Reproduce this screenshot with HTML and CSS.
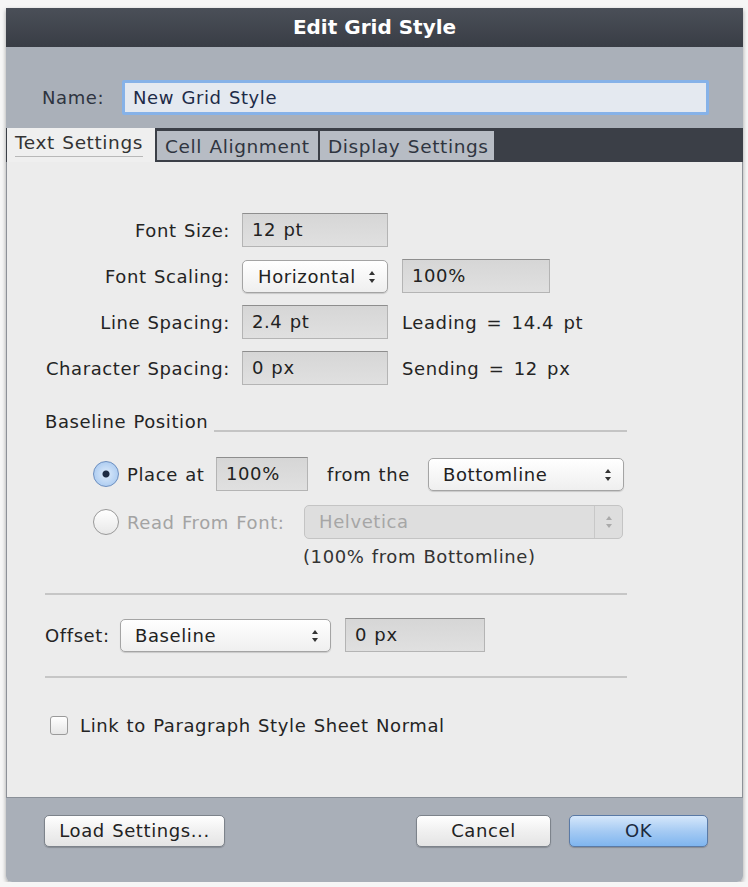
FILE: index.html
```html
<!DOCTYPE html>
<html lang="en">
<head>
    <meta charset="UTF-8">
    <meta name="viewport" content="width=device-width, initial-scale=1.0">
    <title>Edit Grid Style</title>
    <link rel="stylesheet" href="styles.css">
</head>
<body>
    <div class="dialog">
        <div class="titlebar">Edit Grid Style</div>

        <div class="name-bar">
            <span class="name-label">Name:</span>
            <div class="name-field">New Grid Style</div>
        </div>

        <div class="tabs">
            <div class="tab active">Text Settings</div>
            <div class="tab cell">Cell Alignment</div>
            <div class="tab display">Display Settings</div>
        </div>

        <div class="content">
            <div class="form">
                <span class="label">Font Size:</span>
                <div class="field">12 pt</div>
                <span></span>

                <span class="label">Font Scaling:</span>
                <div class="popup small">Horizontal
                    <svg class="arrows" width="8" height="14" viewBox="0 0 8 14"><path d="M4 1 L7 5 L1 5 Z M4 13 L7 9 L1 9 Z" fill="#333"/></svg>
                </div>
                <div class="field side">100%</div>

                <span class="label">Line Spacing:</span>
                <div class="field">2.4 pt</div>
                <span class="note">Leading = 14.4 pt</span>

                <span class="label">Character Spacing:</span>
                <div class="field">0 px</div>
                <span class="note">Sending = 12 px</span>
            </div>

            <div class="section-head">
                <span>Baseline Position</span>
                <div class="rule"></div>
            </div>

            <div class="radio-row">
                <span class="radio checked"></span>
                <span class="radio-text place">Place at</span>
                <div class="field pct">100%</div>
                <span class="from">from the</span>
                <div class="popup wide">Bottomline
                    <svg class="arrows" width="8" height="14" viewBox="0 0 8 14"><path d="M4 1 L7 5 L1 5 Z M4 13 L7 9 L1 9 Z" fill="#333"/></svg>
                </div>
            </div>

            <div class="radio-row second">
                <span class="radio"></span>
                <span class="radio-text read disabled">Read From Font:</span>
                <div class="popup disabled-popup">Helvetica
                    <span class="arrow-box">
                        <svg width="8" height="14" viewBox="0 0 8 14"><path d="M4 1 L7 5 L1 5 Z M4 13 L7 9 L1 9 Z" fill="#aaa"/></svg>
                    </span>
                </div>
            </div>
            <div class="hint">(100% from Bottomline)</div>

            <div class="separator"></div>

            <div class="offset-row">
                <span class="offset-label">Offset:</span>
                <div class="popup offset">Baseline
                    <svg class="arrows" width="8" height="14" viewBox="0 0 8 14"><path d="M4 1 L7 5 L1 5 Z M4 13 L7 9 L1 9 Z" fill="#333"/></svg>
                </div>
                <div class="field offset-field">0 px</div>
            </div>

            <div class="separator"></div>

            <div class="check-row">
                <span class="checkbox"></span>
                <span>Link to Paragraph Style Sheet Normal</span>
            </div>
        </div>

        <div class="footer">
            <div class="button load">Load Settings...</div>
            <div class="footer-right">
                <div class="button cancel">Cancel</div>
                <div class="button ok">OK</div>
            </div>
        </div>
    </div>
</body>
</html>
```

FILE: styles.css
```css
body {
    margin: 0;
    padding: 0;
    background-color: #f6f6f6;
    font-family: "DejaVu Sans", Verdana, sans-serif;
    font-size: 18px;
    letter-spacing: 0.6px;
    word-spacing: 1px;
    white-space: nowrap;
    color: #242424;
}

.dialog {
    width: 737px;
    margin: 8px 0 0 6px;
    border-radius: 0 0 6px 6px;
    overflow: hidden;
    box-shadow: 0 2px 4px rgba(0, 0, 0, 0.35);
}

.titlebar {
    height: 39px;
    line-height: 39px;
    text-align: center;
    color: #fff;
    font-weight: bold;
    font-size: 20px;
    letter-spacing: 0;
    word-spacing: 0;
    background: linear-gradient(#4a4f58, #393d45);
}

.name-bar {
    height: 81px;
    box-sizing: border-box;
    display: flex;
    align-items: flex-end;
    padding: 0 34px 13px 36px;
    background-color: #aab0b9;
}

.name-label {
    width: 80px;
    line-height: 35px;
    color: #2e3440;
}

.name-field {
    flex: 1;
    height: 35px;
    box-sizing: border-box;
    line-height: 29px;
    padding-left: 8px;
    color: #1d2b48;
    background-color: #e4e9f0;
    border: 3px solid #86b2e8;
    border-radius: 2px;
}

.tabs {
    height: 34px;
    box-sizing: border-box;
    display: flex;
    align-items: flex-end;
    padding-left: 1px;
    background-color: #3b3f47;
}

.tab {
    height: 31px;
    line-height: 31px;
    padding-left: 8px;
    margin-right: 2px;
    box-sizing: border-box;
    font-size: 18.5px;
    color: #2f3540;
    background-color: #b7bcc4;
    border-bottom: 2px solid #3b3f47;
}

.tab.active {
    width: 148px;
    height: 34px;
    line-height: 30px;
    color: #333;
    background-color: #efefef;
    border-bottom: 2px solid #efefef;
    text-decoration: underline;
    text-decoration-color: #b8b8b8;
    text-underline-offset: 7px;
}

.tab.cell {
    width: 161px;
}

.tab.display {
    width: 174px;
}

.content {
    height: 635px;
    box-sizing: border-box;
    padding: 51px 0 0 38px;
    background-color: #ececec;
    border-left: 1px solid #8d9198;
    border-right: 1px solid #8d9198;
}

.form {
    display: grid;
    grid-template-columns: 185px 146px auto;
    grid-auto-rows: 34px;
    column-gap: 12px;
    row-gap: 12px;
    align-items: center;
}

.form .label {
    justify-self: end;
}

.form .note {
    padding-left: 2px;
    word-spacing: 3px;
}

.form .side {
    width: 148px;
    margin-left: 2px;
}

.field {
    height: 34px;
    box-sizing: border-box;
    line-height: 32px;
    padding-left: 9px;
    color: #222;
    background: linear-gradient(#d6d6d6, #e0e0e0);
    border: 1px solid #b4b4b4;
    border-top-color: #8e8e8e;
}

.popup {
    position: relative;
    height: 33px;
    box-sizing: border-box;
    line-height: 31px;
    padding-left: 14px;
    color: #222;
    background: linear-gradient(#ffffff, #efefef);
    border: 1px solid #a4a4a4;
    border-radius: 5px;
    box-shadow: 0 1px 1px rgba(0, 0, 0, 0.15);
}

.popup .arrows {
    position: absolute;
    right: 11px;
    top: 9px;
}

.section-head {
    display: flex;
    align-items: flex-end;
    margin-top: 26px;
    width: 582px;
}

.section-head .rule {
    flex: 1;
    margin: 0 0 0 6px;
    border-top: 2px solid #c4c4c4;
}

.radio-row {
    display: flex;
    align-items: center;
    margin-top: 25px;
    padding-left: 48px;
    height: 34px;
}

.radio-row.second {
    margin-top: 14px;
}

.radio {
    width: 26px;
    height: 26px;
    box-sizing: border-box;
    border-radius: 50%;
    border: 1px solid #999;
    background: linear-gradient(#ffffff, #e8e8e8);
    margin-right: 8px;
}

.radio.checked {
    border-color: #6c8fc0;
    background: radial-gradient(circle, #1d2c44 0, #1d2c44 3px, #cfe2f8 4px, #9dc2ee 100%);
}

.radio-text.place {
    width: 89px;
}

.radio-text.read {
    width: 177px;
}

.radio-text.disabled {
    color: #a3a3a3;
}

.pct {
    width: 92px;
}

.from {
    margin: 0 18px 0 19px;
}

.popup.wide {
    width: 196px;
}

.popup.small {
    padding-left: 15px;
}

.disabled-popup {
    width: 319px;
    height: 34px;
    color: #a6a6a6;
    background: #dedede;
    border-color: #c4c4c4;
    box-shadow: none;
}

.arrow-box {
    position: absolute;
    right: 0;
    top: 0;
    width: 27px;
    height: 32px;
    border-left: 1px solid #c8c8c8;
    display: flex;
    align-items: center;
    justify-content: center;
}

.hint {
    margin: 7px 0 0 258px;
    color: #333;
}

.separator {
    width: 582px;
    margin-top: 26px;
    border-top: 2px solid #c6c6c6;
}

.offset-row {
    display: flex;
    align-items: center;
    margin-top: 23px;
    height: 34px;
}

.offset-label {
    width: 75px;
}

.popup.offset {
    width: 211px;
}

.offset-field {
    width: 140px;
    margin-left: 14px;
}

.offset-row + .separator {
    margin-top: 24px;
}

.check-row {
    display: flex;
    align-items: center;
    margin: 37px 0 0 5px;
}

.checkbox {
    width: 18px;
    height: 19px;
    box-sizing: border-box;
    border: 1px solid #9a9a9a;
    border-radius: 3px;
    background: linear-gradient(#ffffff, #e6e6e6);
    margin-right: 12px;
}

.footer {
    height: 85px;
    box-sizing: border-box;
    display: flex;
    justify-content: space-between;
    align-items: flex-start;
    padding: 17px 35px 0 38px;
    background-color: #a9afb8;
    border-top: 1px solid #8a9098;
}

.footer-right {
    display: flex;
    gap: 18px;
}

.button {
    height: 32px;
    box-sizing: border-box;
    line-height: 30px;
    text-align: center;
    color: #222;
    background: linear-gradient(#ffffff, #f0f0f0 50%, #e4e4e4);
    border: 1px solid #7d838b;
    border-radius: 5px;
    box-shadow: 0 1px 1px rgba(0, 0, 0, 0.2);
}

.button.load {
    width: 181px;
}

.button.cancel {
    width: 135px;
}

.button.ok {
    width: 139px;
    color: #1b2a40;
    background: linear-gradient(#d5e7fb, #a6cbf3 50%, #7fb5ef);
    border-color: #5a7aa6;
}
```
